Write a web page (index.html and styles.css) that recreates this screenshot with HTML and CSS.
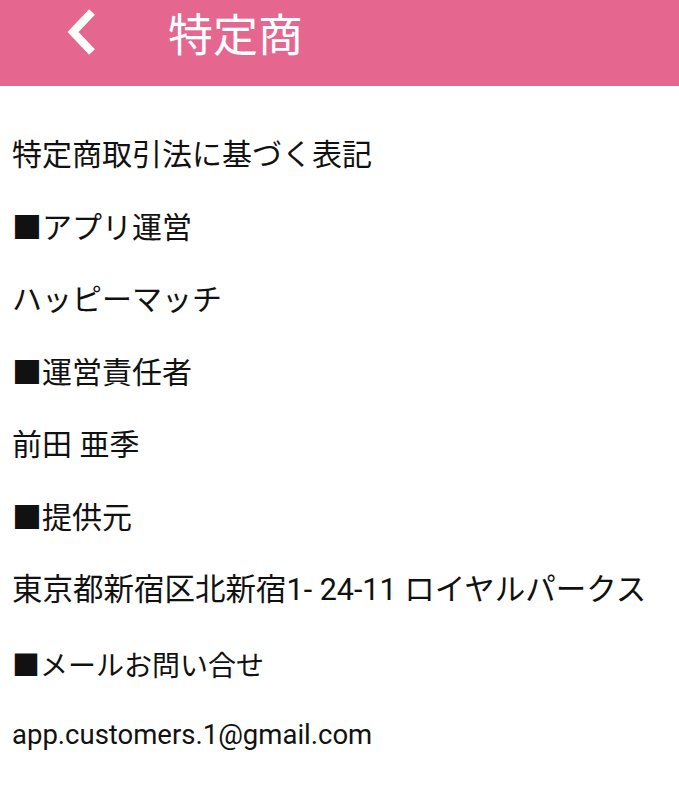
FILE: index.html
```html
<!DOCTYPE html>
<html lang="ja">
<head>
  <meta charset="UTF-8" />
  <title>特定商</title>
  <link rel="stylesheet" href="styles.css">
</head>
<body>

  <div class="header">
    <a class="back" href="#">
      <svg width="34" height="48" viewBox="0 0 34 48">
        <polyline points="28,4 9,24 28,44" fill="none" stroke="#fff" stroke-width="8" />
      </svg>
    </a>
    <h1>特定商</h1>
  </div>

  <div class="content">
    <p>特定商取引法に基づく表記</p>
    <p>■アプリ運営</p>
    <p>ハッピーマッチ</p>
    <p>■運営責任者</p>
    <p>前田 亜季</p>
    <p>■提供元</p>
    <p class="address">東京都新宿区北新宿1- 24-11 ロイヤルパークス</p>
    <p class="small">■メールお問い合せ</p>
    <p class="mail">app.customers.1@gmail.com</p>
  </div>

</body>
</html>
```

FILE: styles.css
```css
body {
  margin: 0;
  font-family: Roboto, "Noto Sans CJK JP", sans-serif;
  background: #fff;
  color: #111;
}
.header {
  display: flex;
  align-items: center;
  height: 86px;
  padding-bottom: 22px;
  box-sizing: border-box;
  background: #e5678f;
}
.back {
  display: flex;
  margin-left: 64px;
  width: 34px;
}
.header h1 {
  margin: 0 0 0 70px;
  font-size: 45px;
  font-weight: normal;
  color: #fff;
}
.content {
  padding: 33px 12px 0;
}
.content p {
  margin: 0;
  height: 72.5px;
  line-height: 72.5px;
  font-size: 30px;
  white-space: nowrap;
}
.content p.address {
  font-size: 30.5px;
}
.content p.small {
  font-size: 28px;
  line-height: 80px;
}
.content p.mail {
  font-size: 27.5px;
}
```
